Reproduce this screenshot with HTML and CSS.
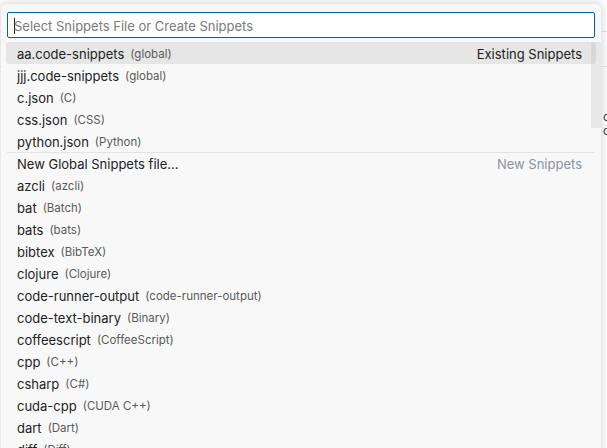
FILE: index.html
```html
<!DOCTYPE html>
<html>
<head>
<meta charset="utf-8">
<link rel="stylesheet" href="styles.css">
</head>
<body>
<div class="editor">
  <div class="ed-line ed-l1"></div>
  <div class="ed-line ed-l2"></div>
  <div class="ed-text">
    <div>c</div>
    <div>c</div>
  </div>
</div>
<div class="quick-input">
  <div class="input-wrap">
    <div class="input"><span class="caret"></span><span class="placeholder">Select Snippets File or Create Snippets</span></div>
  </div>
  <div class="list">
    <div class="row focused"><span class="label">aa.code-snippets</span><span class="desc">(global)</span><span class="group">Existing Snippets</span></div>
    <div class="row"><span class="label">jjj.code-snippets</span><span class="desc">(global)</span></div>
    <div class="row"><span class="label">c.json</span><span class="desc">(C)</span></div>
    <div class="row"><span class="label">css.json</span><span class="desc">(CSS)</span></div>
    <div class="row"><span class="label">python.json</span><span class="desc">(Python)</span></div>
    <div class="row sep"><span class="label">New Global Snippets file...</span><span class="group muted">New Snippets</span></div>
    <div class="row"><span class="label">azcli</span><span class="desc">(azcli)</span></div>
    <div class="row"><span class="label">bat</span><span class="desc">(Batch)</span></div>
    <div class="row"><span class="label">bats</span><span class="desc">(bats)</span></div>
    <div class="row"><span class="label">bibtex</span><span class="desc">(BibTeX)</span></div>
    <div class="row"><span class="label">clojure</span><span class="desc">(Clojure)</span></div>
    <div class="row"><span class="label">code-runner-output</span><span class="desc">(code-runner-output)</span></div>
    <div class="row"><span class="label">code-text-binary</span><span class="desc">(Binary)</span></div>
    <div class="row"><span class="label">coffeescript</span><span class="desc">(CoffeeScript)</span></div>
    <div class="row"><span class="label">cpp</span><span class="desc">(C++)</span></div>
    <div class="row"><span class="label">csharp</span><span class="desc">(C#)</span></div>
    <div class="row"><span class="label">cuda-cpp</span><span class="desc">(CUDA C++)</span></div>
    <div class="row"><span class="label">dart</span><span class="desc">(Dart)</span></div>
    <div class="row"><span class="label">diff</span><span class="desc">(Diff)</span></div>
  </div>
  <div class="slider"></div>
</div>
</body>
</html>
```
FILE: styles.css
```css
html, body {
  margin: 0;
  padding: 0;
  width: 607px;
  height: 448px;
  overflow: hidden;
}
body {
  background: #f8f8f8;
  font-family: Inter, "Open Sans", sans-serif;
  font-size: 13px;
  color: #222;
  position: relative;
}
.editor {
  position: absolute;
  inset: 0;
  background: #ffffff;
}
.ed-line {
  position: absolute;
  left: 0;
  right: 0;
  height: 1px;
  background: #e5e5e5;
}
.ed-l1 { top: 31px; }
.ed-l2 { top: 66px; }
.ed-text {
  position: absolute;
  left: 603px;
  top: 110px;
  font-size: 12px;
  line-height: 14px;
  color: #444;
}
.quick-input {
  position: absolute;
  left: 1px;
  top: 4px;
  width: 600px;
  height: 470px;
  background: #f8f8f8;
  border-radius: 6px;
  box-shadow: 0 0 8px 2px rgba(0, 0, 0, 0.14);
  padding: 8px 5px 0 5px;
  box-sizing: border-box;
}
.input-wrap {
  padding: 0 1px;
}
.input {
  height: 26px;
  box-sizing: border-box;
  border: 1px solid #005fb8;
  border-radius: 2px;
  background: #ffffff;
  display: flex;
  align-items: center;
  padding: 1px 0 0 6px;
}
.caret {
  width: 1px;
  height: 16px;
  background: #222;
}
.placeholder {
  color: #7a7a7a;
  font-size: 13px;
  margin-left: -1px;
}
.list {
  margin-top: 4px;
}
.row {
  height: 22px;
  box-sizing: border-box;
  display: flex;
  align-items: center;
  padding: 1px 14px 0 11px;
  border-radius: 3px;
  white-space: nowrap;
}
.row.focused {
  background: #e6e6e6;
}
.row.sep {
  position: relative;
}
.row.sep::before {
  content: "";
  position: absolute;
  left: 1px;
  right: 1px;
  top: 0;
  height: 1px;
  background: #e3e3e3;
}
.label {
  color: #222;
}
.desc {
  margin-left: 6px;
  font-size: 11.5px;
  color: #5a5a5a;
}
.group {
  margin-left: auto;
  color: #222;
}
.group.muted {
  color: #8b949e;
}
.slider {
  position: absolute;
  left: 590px;
  top: 38px;
  width: 10px;
  height: 86px;
  background: rgba(100, 100, 100, 0.1);
}
```
